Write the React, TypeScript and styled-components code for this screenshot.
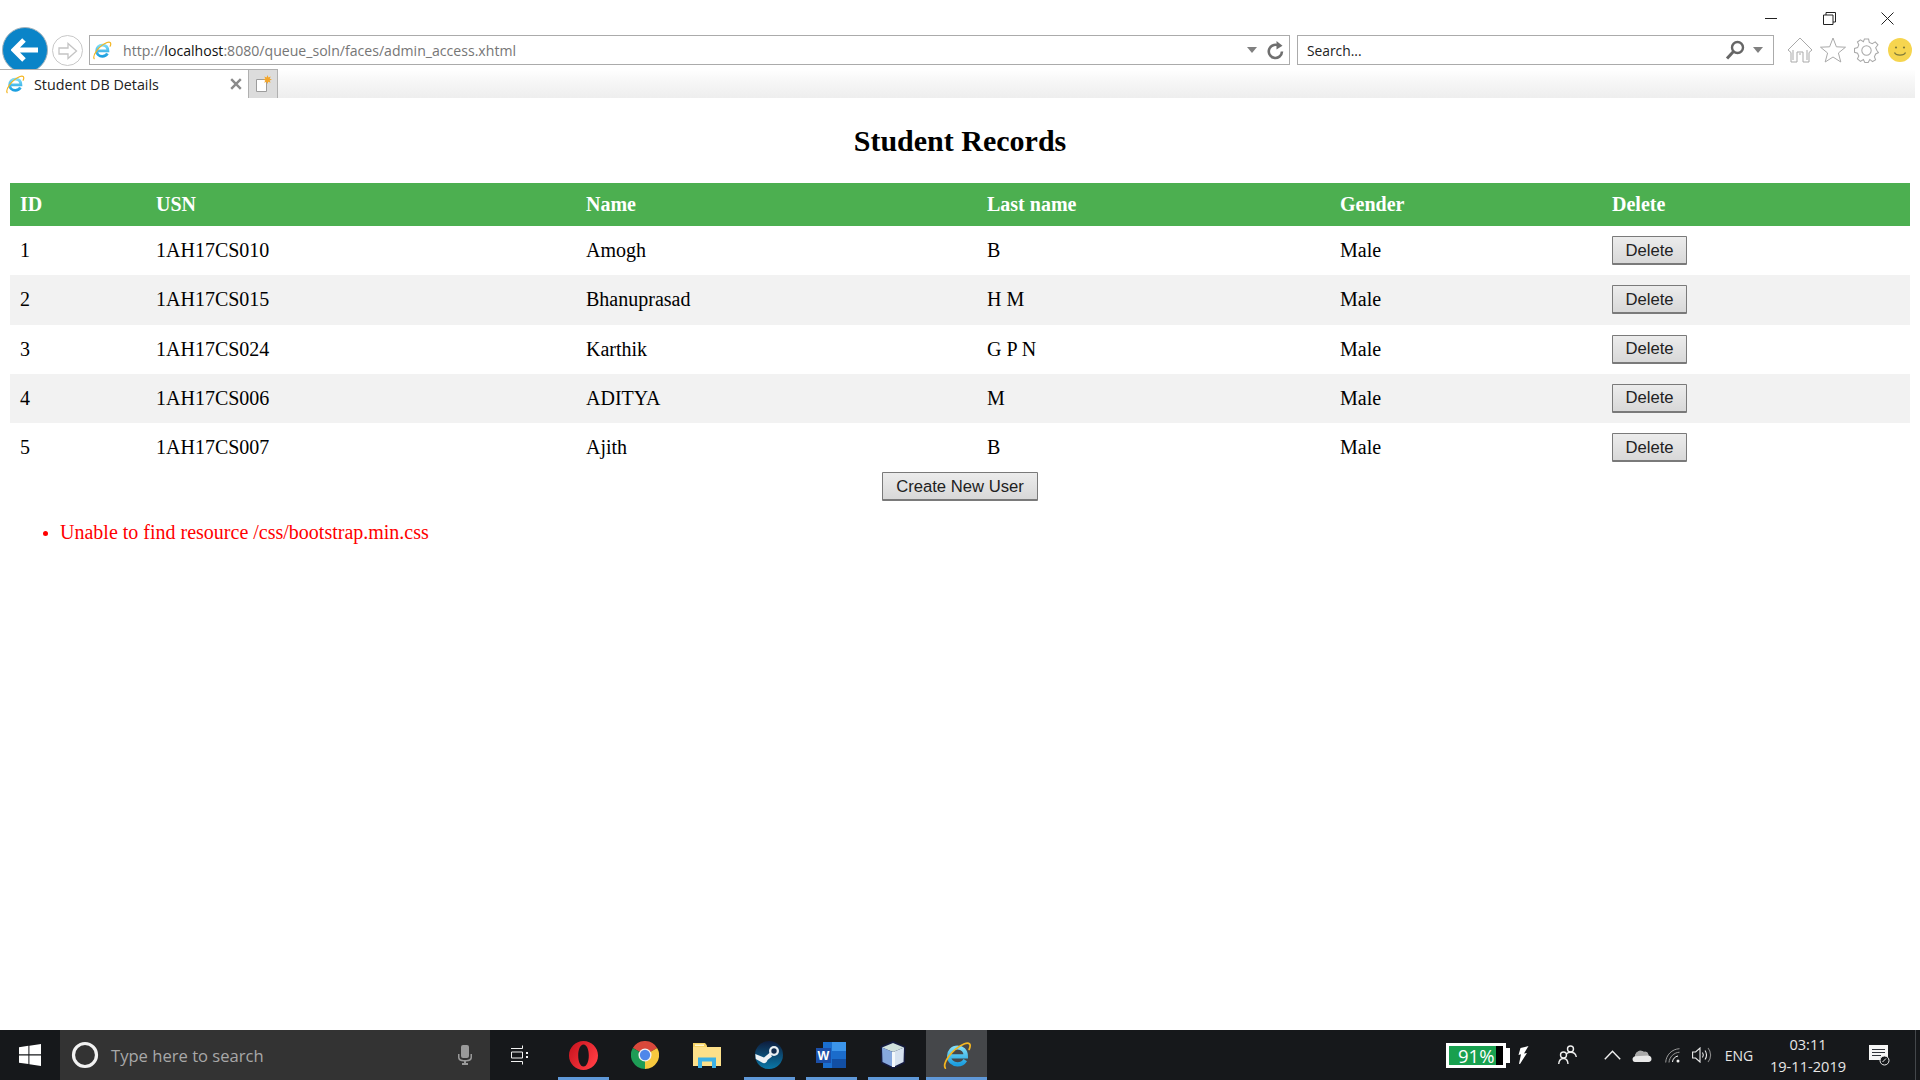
import React from "react";
import styled, { createGlobalStyle } from "styled-components";

const Global = createGlobalStyle`
  html, body { margin: 0; padding: 0; background: #fff; }
  body { font-family: "Liberation Serif", "Times New Roman", serif; overflow: hidden; }
`;

const Page = styled.div`
  width: 1920px;
  height: 1080px;
  display: flex;
  flex-direction: column;
  overflow: hidden;
`;

/* ---------- browser chrome ---------- */
const Chrome = styled.header`
  flex: 0 0 98px;
  height: 98px;
  display: flex;
  flex-direction: column;
  background: #fff;
  font-family: "Open Sans", "Noto Sans", sans-serif;
`;
const TitleRow = styled.div`
  flex: 0 0 31px;
  height: 31px;
  display: flex;
  justify-content: flex-end;
  padding-right: 4px;
`;
const WinButton = styled.div`
  width: 58px;
  height: 36px;
  display: flex;
  align-items: center;
  justify-content: center;
  color: #222;
`;
const NavRow = styled.div`
  flex: 0 0 38px;
  height: 38px;
  display: flex;
  align-items: center;
  padding-left: 2px;
`;
const BackButton = styled.div`
  flex: 0 0 46px;
  height: 46px;
  box-sizing: border-box;
  border-radius: 50%;
  background: #0a84c8;
  border: 1px solid #a6b4bc;
  display: flex;
  align-items: center;
  justify-content: center;
`;
const ForwardButton = styled.div`
  flex: 0 0 31px;
  height: 31px;
  box-sizing: border-box;
  margin: 1px 5.5px 0 4px;
  border-radius: 50%;
  border: 1px solid #c8c8c8;
  display: flex;
  align-items: center;
  justify-content: center;
`;
const Field = styled.div<{ $w?: number }>`
  ${(p) => (p.$w ? `flex: 0 0 ${p.$w}px;` : "flex: 1;")}
  height: 30px;
  box-sizing: border-box;
  border: 1px solid #ababab;
  display: flex;
  align-items: center;
  background: #fff;
`;
const Address = styled.div`
  padding-left: 2px;
  flex: 1;
  display: flex;
  align-items: center;
  font-size: 14.1px;
  color: #767676;
  white-space: nowrap;
  strong { font-weight: 400; color: #111; }
`;
const AddressIcon = styled.span`
  display: inline-flex;
  margin-right: 11.5px;
`;
const SearchText = styled.div`
  flex: 1;
  padding-left: 9px;
  font-size: 13.8px;
  color: #222;
`;
const FieldIcon = styled.div<{ $w: number }>`
  flex: 0 0 ${(p) => p.$w}px;
  width: ${(p) => p.$w}px;
  height: 100%;
  display: flex;
  align-items: center;
  justify-content: center;
  svg { flex-shrink: 0; }
`;
const Gap = styled.div`
  flex: 0 0 7px;
`;
const Tools = styled.div`
  flex: 0 0 146px;
  box-sizing: border-box;
  padding-left: 9px;
  display: flex;
  align-items: center;
`;
const ToolSlot = styled.div`
  flex: 0 0 33.5px;
  display: flex;
  align-items: center;
  justify-content: center;
`;
const TabRow = styled.div`
  position: relative;
  z-index: 1;
  flex: 0 0 29px;
  height: 29px;
  display: flex;
  padding-right: 5px;
  background: linear-gradient(#ffffff 0%, #f7f7f7 40%, #eeeeee 100%) content-box;
`;
const Tab = styled.div`
  flex: 0 0 249px;
  box-sizing: border-box;
  display: flex;
  align-items: center;
  padding-left: 5px;
  background: #fff;
  border-top: 1px solid #b0b0b0;
  border-right: 1px solid #b0b0b0;
  font-size: 14.3px;
  color: #222;
`;
const TabTitle = styled.span`
  flex: 1;
  margin-left: 9px;
`;
const TabClose = styled.div`
  flex: 0 0 24px;
  display: flex;
  justify-content: center;
`;
const NewTab = styled.div`
  flex: 0 0 29px;
  box-sizing: border-box;
  background: #dcdcdc;
  border-top: 1px solid #b0b0b0;
  border-right: 1px solid #b0b0b0;
  display: flex;
  align-items: center;
  justify-content: center;
`;

/* ---------- page content ---------- */
const Content = styled.main`
  flex: 1;
  padding: 0 10px;
  color: #000;
`;
const Title = styled.h2`
  margin: 0;
  padding: 26px 0 25px;
  font-size: 30px;
  line-height: 34px;
  font-weight: 700;
  text-align: center;
`;
const Table = styled.table`
  width: 1900px;
  border-collapse: collapse;
  table-layout: fixed;
  font-size: 20px;
`;
const Col = styled.col<{ $w: number }>`
  width: ${(p) => p.$w}px;
`;
const Th = styled.th`
  height: 43px;
  box-sizing: border-box;
  padding: 0 10px;
  background: #4caf50;
  color: #fff;
  text-align: left;
  font-weight: 700;
`;
const Row = styled.tr<{ $alt: boolean }>`
  height: 49.25px;
  background: ${(p) => (p.$alt ? "#f2f2f2" : "#fff")};
`;
const Td = styled.td`
  padding: 0 10px;
  vertical-align: middle;
`;
const Button = styled.button<{ $w: number }>`
  display: block;
  width: ${(p) => p.$w}px;
  height: 29px;
  padding: 1px 0 0;
  box-sizing: border-box;
  font-family: "Liberation Sans", Arial, sans-serif;
  font-size: 16.67px;
  color: #222;
  background: linear-gradient(#ececec, #d8d8d8);
  border: 1px solid #7a7a7a;
  border-bottom-width: 2px;
  border-radius: 1px;
`;
const CreateRow = styled.div`
  display: flex;
  justify-content: center;
`;
const Errors = styled.ul`
  margin: 20px 0 0;
  padding: 0 0 0 50px;
  color: #ff0000;
  font-size: 20px;
  line-height: 23px;
  li::marker { font-size: 17px; }
`;

/* ---------- taskbar ---------- */
const Taskbar = styled.footer`
  flex: 0 0 50px;
  height: 50px;
  display: flex;
  align-items: stretch;
  background: #16181b;
  color: #e6e6e6;
  font-family: "Open Sans", "Noto Sans", sans-serif;
`;
const Start = styled.div`
  flex: 0 0 60px;
  display: flex;
  align-items: center;
  justify-content: center;
`;
const SearchBox = styled.div`
  flex: 0 0 430px;
  box-sizing: border-box;
  background: #333333;
  display: flex;
  align-items: center;
  padding: 0 18px 0 11px;
  color: #a8a8a8;
  font-size: 16.6px;
`;
const SearchHint = styled.span`
  flex: 1;
  margin-left: 12px;
`;
const TaskView = styled.div`
  flex: 0 0 62px;
  display: flex;
  align-items: center;
  justify-content: center;
`;
const AppSlot = styled.div<{ $open?: boolean; $active?: boolean }>`
  position: relative;
  flex: 0 0 62px;
  display: flex;
  align-items: center;
  justify-content: center;
  background: ${(p) => (p.$active ? "#45474a" : "transparent")};
  ${(p) => (p.$active ? "flex-basis: 61px; margin-left: 2px;" : "")}
  &::after {
    content: "";
    display: ${(p) => (p.$open ? "block" : "none")};
    position: absolute;
    bottom: 0;
    left: ${(p) => (p.$active ? 0 : 6)}px;
    right: ${(p) => (p.$active ? 0 : 5)}px;
    height: 3px;
    background: #5f98d8;
  }
`;
const Tray = styled.div`
  margin-left: auto;
  display: flex;
  align-items: center;
  padding-right: 16px;
  position: relative;
  &::after {
    content: "";
    position: absolute;
    top: 0;
    bottom: 0;
    right: 4px;
    width: 1px;
    background: #44474b;
  }
`;
const TrayItem = styled.div<{ $w: number }>`
  flex: 0 0 ${(p) => p.$w}px;
  display: flex;
  align-items: center;
  justify-content: center;
`;
const Battery = styled.div`
  display: flex;
  align-items: center;
`;
const BatteryBody = styled.div`
  width: 60px;
  height: 25px;
  box-sizing: border-box;
  border: 3px solid #fff;
  background: linear-gradient(90deg, #18a04f 0, #18a04f 87%, #000 87%);
  color: #fff;
  font-size: 18.5px;
  line-height: 19px;
  padding-left: 9px;
`;
const BatteryNub = styled.div`
  width: 4px;
  height: 15px;
  background: #fff;
`;
const Lang = styled.span`
  font-size: 14px;
  color: #e6e6e6;
`;
const Clock = styled.div`
  font-size: 14.6px;
  line-height: 22px;
  text-align: center;
  color: #e6e6e6;
`;

/* ---------- drawings ---------- */
const IEIcon = ({ s = 18 }: { s?: number }) => (
  <svg width={s} height={s} viewBox="0 0 32 32" fill="none">
    <defs>
      <linearGradient id="ieblue" x1="0" y1="0" x2="0" y2="1">
        <stop offset="0" stopColor="#7fdcf7" />
        <stop offset="1" stopColor="#1c9fe0" />
      </linearGradient>
    </defs>
    <path d="M8 17.5H25.5C25.5 11 21.5 8 16.5 8C11 8 7.5 12.5 7.5 17C7.5 22.5 11.5 26 16.5 26C20 26 23 24.5 24.8 21.5" stroke="url(#ieblue)" strokeWidth="4.4" />
    <path d="M3.5 30C0.5 25 10 10 24 4C29 2 31.5 4.5 29 10" stroke="#f3b520" strokeWidth="1.9" strokeLinecap="round" />
  </svg>
);

const Minimize = () => (
  <svg width="12" height="12" viewBox="0 0 12 12"><path d="M0 6.5H12" stroke="#222" /></svg>
);
const Restore = () => (
  <svg width="13" height="13" viewBox="0 0 13 13" fill="none"><path d="M3 3V.5H12.5V10H10M.5 3H10V12.5H.5Z" stroke="#222" /></svg>
);
const CloseX = () => (
  <svg width="13" height="13" viewBox="0 0 13 13" fill="none"><path d="M.5.5L12.5 12.5M12.5.5L.5 12.5" stroke="#222" /></svg>
);
const BackArrow = () => (
  <svg width="28" height="24" viewBox="0 0 28 24" fill="none"><path d="M13 2L3 12L13 22M3.5 12H27" stroke="#fff" strokeWidth="5" /></svg>
);
const ForwardArrow = () => (
  <svg width="20" height="18" viewBox="0 0 20 18" fill="none"><path d="M1 6H10V1.5L18.5 9L10 16.5V12H1Z" stroke="#c4c4c4" strokeWidth="1.3" /></svg>
);
const Caret = () => (
  <svg width="10" height="6" viewBox="0 0 10 6"><path d="M0 0H10L5 6Z" fill="#808080" /></svg>
);
const Refresh = () => (
  <svg width="18" height="21" viewBox="0 0 18 21" fill="none">
    <path d="M12.5 6.2A6.6 6.6 0 1 0 15 11.5" stroke="#6f6f6f" strokeWidth="2.6" />
    <path d="M9.5 1L15.5 5.8L9.5 9.5Z" fill="#6f6f6f" />
  </svg>
);
const Magnifier = () => (
  <svg width="20" height="20" viewBox="0 0 20 20" fill="none">
    <circle cx="12.5" cy="7.5" r="5.5" stroke="#666" strokeWidth="2.4" />
    <path d="M8.5 11.5L2 18.5" stroke="#666" strokeWidth="3" />
  </svg>
);
const Home = () => (
  <svg width="26" height="26" viewBox="0 0 26 26" fill="none" stroke="#a9a9a9" strokeWidth="1">
    <path d="M1 13L13 1L25 13L22 15.5V25H16V15H10V25H4V15.5Z" />
    <path d="M6 13V23M20 13V23M12 17H14" />
  </svg>
);
const Star = () => (
  <svg width="26" height="26" viewBox="0 0 26 26" fill="none" stroke="#a9a9a9" strokeWidth="1">
    <path d="M13 1L16.4 9.8L25.5 10.2L18.4 16L20.8 25L13 20L5.2 25L7.6 16L.5 10.2L9.6 9.8Z" />
  </svg>
);
const Gear = () => (
  <svg width="25" height="25" viewBox="0 0 24 24" fill="none" stroke="#a9a9a9" strokeWidth="1">
    <path d="M10 1H14L14.7 4.3L17.5 5.5L20.4 3.7L23 6.5L20.8 9.4L22 12L23.5 14L20.8 15.3L19.6 18L20.7 21L17.8 22.6L15.2 20.6L13.6 23.5H10.4L9 20.6L6.2 22.4L3.3 20L4.6 17.2L3.4 14.6L.5 13.8V10L3.5 9.2L4.6 6.6L3.3 3.8L6.2 1.8L9 3.6Z" />
    <circle cx="12" cy="12" r="4.5" />
  </svg>
);
const Smiley = () => (
  <svg width="24" height="24" viewBox="0 0 24 24" fill="none">
    <circle cx="12" cy="12" r="12" fill="#f6d54f" />
    <circle cx="8" cy="9.5" r="1.1" fill="#7f7a3a" />
    <circle cx="16" cy="9.5" r="1.1" fill="#7f7a3a" />
    <path d="M6.5 14.5C8 18 16 18 17.5 14.5" stroke="#7f7a3a" strokeWidth="1.3" />
  </svg>
);
const TabX = () => (
  <svg width="12" height="12" viewBox="0 0 12 12"><path d="M1.2 1.2L10.8 10.8M10.8 1.2L1.2 10.8" stroke="#8a8a8a" strokeWidth="2.4" /></svg>
);
const NewTabIcon = () => (
  <svg width="20" height="20" viewBox="0 0 20 20">
    <path d="M3.5 5.5H13.5V17.5H3.5Z" fill="#fff" stroke="#9c9c9c" />
    <path d="M14.5 1L15.4 3.4L17.8 2.4L16.7 4.7L19 5.6L16.7 6.5L17.6 8.8L15.3 7.8L14.4 10L13.5 7.8L11.2 8.8L12.3 6.5L10 5.6L12.3 4.7L11.3 2.4L13.6 3.4Z" fill="#f4a62a" />
  </svg>
);
const WindowsLogo = () => (
  <svg width="22" height="22" viewBox="0 0 22 22" fill="#fff">
    <path d="M0 3.2L9.4 1.8V10.3H0ZM10.4 1.7L22 0V10.3H10.4ZM0 11.4H9.4V20L0 18.7ZM10.4 11.4H22V22L10.4 20.2Z" />
  </svg>
);
const Cortana = () => (
  <svg width="28" height="28" viewBox="0 0 28 28" fill="none"><circle cx="14" cy="14" r="11.5" stroke="#f2f2f2" strokeWidth="3.2" /></svg>
);
const Mic = () => (
  <svg width="14" height="20" viewBox="0 0 14 20" fill="#9a9a9a">
    <rect x="3" y="0" width="8" height="13" rx="2" />
    <path d="M0 9H1.5V12C1.5 14 3 15 7 15C11 15 12.5 14 12.5 12V9H14V12.5C14 15 12 16.5 8 16.6V18H10V20H4V18H6V16.6C2 16.5 0 15 0 12.5Z" />
  </svg>
);
const TaskViewIcon = () => (
  <svg width="20" height="20" viewBox="0 0 20 20" fill="none" stroke="#f2f2f2" strokeWidth="1">
    <path d="M0 3.5H11.5V.5M0 16.5H11.5V19.5M.5 7H11.5V13H.5Z" />
    <path d="M15 7H17V9H15ZM15 11H17V13H15Z" fill="#f2f2f2" stroke="none" />
  </svg>
);
const Opera = () => (
  <svg width="29" height="29" viewBox="0 0 29 29">
    <defs>
      <linearGradient id="opera" x1="0" y1="0" x2="1" y2="0.6">
        <stop offset="0" stopColor="#c4111c" />
        <stop offset="1" stopColor="#ff3b42" />
      </linearGradient>
    </defs>
    <path fillRule="evenodd" fill="url(#opera)" d="M14.5 0C22.5 0 29 6.5 29 14.5S22.5 29 14.5 29S0 22.5 0 14.5S6.5 0 14.5 0ZM14.5 3.5C11.2 3.5 9.2 8.5 9.2 14.5S11.2 25.5 14.5 25.5S19.8 20.5 19.8 14.5S17.8 3.5 14.5 3.5Z" />
  </svg>
);
const ChromeLogo = () => (
  <svg width="28" height="28" viewBox="0 0 24 24">
    <path d="M12 12L1.6 6A12 12 0 0 1 22.4 6Z" fill="#d9483b" />
    <path d="M12 12L22.4 6A12 12 0 0 1 12 24Z" fill="#f7c83e" />
    <path d="M12 12L12 24A12 12 0 0 1 1.6 6Z" fill="#1e9c56" />
    <circle cx="12" cy="12" r="5.6" fill="#f1f1f1" />
    <circle cx="12" cy="12" r="4.4" fill="#4f87ea" />
  </svg>
);
const Folder = () => (
  <svg width="28" height="26" viewBox="0 0 28 26">
    <path d="M0 1H12L14 3.5V5H0Z" fill="#f5d264" />
    <path d="M2 2.5H11V4H2Z" fill="#fff6d0" />
    <path d="M0 5H28V24H0Z" fill="#fde08a" />
    <path d="M5 26V15.5H23V26H19V19.5H9V26Z" fill="#3cb1e6" />
  </svg>
);
const Steam = () => (
  <svg width="28" height="28" viewBox="0 0 28 28">
    <defs>
      <linearGradient id="steam" x1="0" y1="0" x2="0" y2="1">
        <stop offset="0" stopColor="#0e1c3c" />
        <stop offset="1" stopColor="#0a78a8" />
      </linearGradient>
    </defs>
    <circle cx="14" cy="14" r="14" fill="url(#steam)" />
    <circle cx="19" cy="10" r="5" fill="#e8eef2" />
    <circle cx="19" cy="10" r="2.7" fill="#0f2a4c" />
    <path d="M0.3 13L9 16.5L15 11.5L17 15.5L12.5 19C12 22 9 23 7 21.5L0.8 18Z" fill="#eef2f5" />
  </svg>
);
const Word = () => (
  <svg width="30" height="26" viewBox="0 0 30 26">
    <rect x="7" y="0" width="23" height="26" fill="#1a6fd0" />
    <rect x="16" y="0" width="14" height="9" fill="#3c95ea" />
    <rect x="16" y="9" width="14" height="8" fill="#1b6ccb" />
    <rect x="16" y="17" width="14" height="9" fill="#124fa4" />
    <rect x="0" y="6" width="15" height="15" fill="#1c4fa8" />
    <text x="7.5" y="18" fontFamily="Liberation Sans, sans-serif" fontWeight="700" fontSize="12.5" fill="#fff" textAnchor="middle">W</text>
  </svg>
);
const Cube = () => (
  <svg width="26" height="28" viewBox="0 0 26 28">
    <path d="M13 0L25.5 5.5L25 22L13 28L1 22L.5 5.5Z" fill="#151a3d" />
    <path d="M13 2L24 6.5L13 11L2 6.5Z" fill="#cfe0dc" />
    <path d="M2 6.5L13 11V26L2.5 21Z" fill="#86a8de" />
    <path d="M24 6.5L13 11V26L23.5 21Z" fill="#d6e2f0" />
    <path d="M12 11H15V26H12Z" fill="#f4f8fb" />
  </svg>
);
const Bolt = () => (
  <svg width="11" height="18" viewBox="0 0 11 18" fill="#fff">
    <path d="M10.5 0L2.5 2L0.5 9L3 8.3L1 17.8L2 18L9 7L6 7.6Z" />
  </svg>
);
const People = () => (
  <svg width="19" height="20" viewBox="0 0 19 20" fill="none" stroke="#f0f0f0" strokeWidth="1.4">
    <circle cx="5.5" cy="10" r="3" />
    <path d="M.7 19C1 15.5 3 13.5 5.5 13.5C8 13.5 9.8 15.5 10 19" />
    <circle cx="12.5" cy="4" r="3" />
    <path d="M8.5 8.8C9.5 7.8 11 7.2 12.5 7.2C15.5 7.2 17.8 9 18.3 12" />
  </svg>
);
const Chevron = () => (
  <svg width="17" height="10" viewBox="0 0 17 10" fill="none"><path d="M.8 9.2L8.5 1.2L16.2 9.2" stroke="#f0f0f0" strokeWidth="1.4" /></svg>
);
const Cloud = () => (
  <svg width="20" height="13" viewBox="0 0 20 13">
    <path d="M3 13C0 13 -.5 8 3 7.2C3.5 3 8 0 12 3C15 2 16.5 4.5 16.5 6.5C20.5 7 20.5 13 16.5 13Z" fill="#e8e8e8" />
    <path d="M3 7.2C3.5 3 8 0 12 3C15 2 16.5 4.5 16.5 6.5Z" fill="#8f8f8f" opacity="0.7" />
  </svg>
);
const Wifi = () => (
  <svg width="16" height="15" viewBox="0 0 16 15" fill="none" stroke="#9a9a9a" strokeWidth="1">
    <path d="M.7 14.5C1 7 7 1 14.5 .7M4 14.5C4.3 9 9 4.5 14.5 4.2" />
    <path d="M7.5 14C7.6 11 10 8.5 13 8" stroke="#f0f0f0" />
    <circle cx="13" cy="13" r="1.5" fill="#f0f0f0" stroke="none" />
  </svg>
);
const Speaker = () => (
  <svg width="20" height="16" viewBox="0 0 20 16" fill="none" stroke="#ececec" strokeWidth="1.1">
    <path d="M.6 5H3.6L8 1V15L3.6 11H.6Z" />
    <path d="M10.5 5.5C11.5 7 11.5 9 10.5 10.5M13 3.5C15 6 15 10 13 12.5" />
    <path d="M16 1C19.5 5 19.5 11 16 15" stroke="#8a8a8a" />
  </svg>
);
const Notification = () => (
  <svg width="22" height="22" viewBox="0 0 22 22">
    <path d="M1 1H20V16H1Z" fill="#f6f6f6" />
    <path d="M4 5.5H17M4 8.5H17M4 11.5H13" stroke="#30333a" strokeWidth="1.2" />
    <circle cx="16.5" cy="16.5" r="4.5" fill="#16181b" stroke="#f0f0f0" />
    <path d="M14.5 18L18 14.5" stroke="#f0f0f0" />
  </svg>
);

const students = [
  { id: 1, usn: "1AH17CS010", name: "Amogh", last: "B" },
  { id: 2, usn: "1AH17CS015", name: "Bhanuprasad", last: "H M" },
  { id: 3, usn: "1AH17CS024", name: "Karthik", last: "G P N" },
  { id: 4, usn: "1AH17CS006", name: "ADITYA", last: "M" },
  { id: 5, usn: "1AH17CS007", name: "Ajith", last: "B" },
];
const columns = [136, 430, 401, 353, 272, 308];
const headings = ["ID", "USN", "Name", "Last name", "Gender", "Delete"];

export default function App() {
  return (
    <Page>
      <Global />
      <Chrome>
        <TitleRow>
          <WinButton><Minimize /></WinButton>
          <WinButton><Restore /></WinButton>
          <WinButton><CloseX /></WinButton>
        </TitleRow>
        <NavRow>
          <BackButton><BackArrow /></BackButton>
          <ForwardButton><ForwardArrow /></ForwardButton>
          <Field>
            <Address>
              <AddressIcon><IEIcon s={20} /></AddressIcon>
              <span>http://<strong>localhost</strong>:8080/queue_soln/faces/admin_access.xhtml</span>
            </Address>
            <FieldIcon $w={20}><Caret /></FieldIcon>
            <FieldIcon $w={27}><Refresh /></FieldIcon>
          </Field>
          <Gap />
          <Field $w={477}>
            <SearchText>Search...</SearchText>
            <FieldIcon $w={16}><Magnifier /></FieldIcon>
            <FieldIcon $w={30}><Caret /></FieldIcon>
          </Field>
          <Tools>
            <ToolSlot><Home /></ToolSlot>
            <ToolSlot><Star /></ToolSlot>
            <ToolSlot><Gear /></ToolSlot>
            <ToolSlot><Smiley /></ToolSlot>
          </Tools>
        </NavRow>
        <TabRow>
          <Tab>
            <IEIcon s={20} />
            <TabTitle>Student DB Details</TabTitle>
            <TabClose><TabX /></TabClose>
          </Tab>
          <NewTab><NewTabIcon /></NewTab>
        </TabRow>
      </Chrome>

      <Content>
        <Title>Student Records</Title>
        <Table>
          <colgroup>
            {columns.map((w, i) => <Col key={i} $w={w} />)}
          </colgroup>
          <thead>
            <tr>{headings.map((h) => <Th key={h}>{h}</Th>)}</tr>
          </thead>
          <tbody>
            {students.map((s, i) => (
              <Row key={s.id} $alt={i % 2 === 1}>
                <Td>{s.id}</Td>
                <Td>{s.usn}</Td>
                <Td>{s.name}</Td>
                <Td>{s.last}</Td>
                <Td>Male</Td>
                <Td><Button $w={75}>Delete</Button></Td>
              </Row>
            ))}
          </tbody>
        </Table>
        <CreateRow><Button $w={156}>Create New User</Button></CreateRow>
        <Errors><li>Unable to find resource /css/bootstrap.min.css</li></Errors>
      </Content>

      <Taskbar>
        <Start><WindowsLogo /></Start>
        <SearchBox>
          <Cortana />
          <SearchHint>Type here to search</SearchHint>
          <Mic />
        </SearchBox>
        <TaskView><TaskViewIcon /></TaskView>
        <AppSlot $open><Opera /></AppSlot>
        <AppSlot><ChromeLogo /></AppSlot>
        <AppSlot><Folder /></AppSlot>
        <AppSlot $open><Steam /></AppSlot>
        <AppSlot $open><Word /></AppSlot>
        <AppSlot $open><Cube /></AppSlot>
        <AppSlot $open $active><IEIcon s={30} /></AppSlot>
        <Tray>
          <TrayItem $w={64}>
            <Battery>
              <BatteryBody>91%</BatteryBody>
              <BatteryNub />
            </Battery>
          </TrayItem>
          <TrayItem $w={26}><Bolt /></TrayItem>
          <TrayItem $w={62}><People /></TrayItem>
          <TrayItem $w={29}><Chevron /></TrayItem>
          <TrayItem $w={30}><Cloud /></TrayItem>
          <TrayItem $w={31}><Wifi /></TrayItem>
          <TrayItem $w={28}><Speaker /></TrayItem>
          <TrayItem $w={46}><Lang>ENG</Lang></TrayItem>
          <TrayItem $w={92}>
            <Clock>03:11<br />19-11-2019</Clock>
          </TrayItem>
          <TrayItem $w={50}><Notification /></TrayItem>
        </Tray>
      </Taskbar>
    </Page>
  );
}
